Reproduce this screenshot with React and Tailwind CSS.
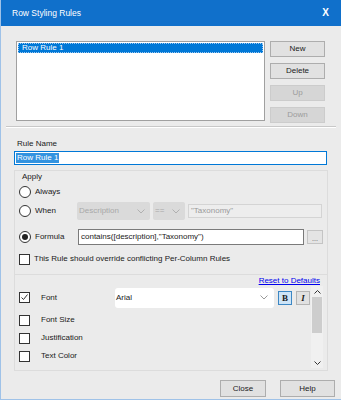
import React from 'react';

const Radio = ({ checked }) => (
  <span className="flex h-[12px] w-[12px] items-center justify-center rounded-full border border-[#333333] bg-white">
    {checked && <span className="h-[6px] w-[6px] rounded-full bg-[#222222]" />}
  </span>
);

const Check = ({ checked }) => (
  <span className="flex h-[11px] w-[11px] items-center justify-center border border-[#333333] bg-white">
    {checked && (
      <svg width="9" height="9" viewBox="0 0 9 9">
        <path d="M1.5 4.5 L3.5 6.5 L7.5 1.5" fill="none" stroke="#333" strokeWidth="1" />
      </svg>
    )}
  </span>
);

const Chevron = ({ color = '#9a9a9a' }) => (
  <svg width="8" height="5" viewBox="0 0 8 5">
    <path d="M0.5 0.5 L4 4 L7.5 0.5" fill="none" stroke={color} strokeWidth="1" />
  </svg>
);

const Button = ({ children, disabled, className = '' }) => (
  <div
    className={`flex items-center justify-center border text-[8px] ${
      disabled
        ? 'border-[#cccccc] bg-[#d6d6d6] text-[#9c9c9c]'
        : 'border-[#adadad] bg-[#e1e1e1] text-[#1a1a1a]'
    } ${className}`}
  >
    {children}
  </div>
);

export default function App() {
  const styleRows = [
    { label: 'Font', checked: true },
    { label: 'Font Size' },
    { label: 'Justification' },
    { label: 'Text Color' },
  ];

  return (
    <div
      className="flex h-[400px] w-[341px] flex-col border-b border-l border-[#9fc2e8] bg-[#ebebeb] text-[8px] leading-[12px] text-[#1a1a1a]"
      style={{ fontFamily: '"Liberation Sans", Arial, sans-serif' }}
    >
      {/* Title bar */}
      <div className="flex h-[26px] shrink-0 items-center justify-between bg-[#1070cb] pl-[11px] pr-[12px] text-white">
        <span className="text-[8.5px]">Row Styling Rules</span>
        <span className="text-[10px] font-bold">X</span>
      </div>

      {/* Rules list */}
      <div className="mt-[15px] flex pl-[15px]">
        <div className="h-[80px] w-[249px] border border-[#a0a0a0] bg-white p-[1px]">
          <div className="h-[10px] border border-dotted border-[#9cc8f0] bg-[#0078d7] pl-[3px] leading-[8px] text-white">Row Rule 1</div>
        </div>
        <div className="ml-[5px] flex w-[55px] flex-col gap-[6px]">
          <Button className="h-[16px]">New</Button>
          <Button className="h-[16px]">Delete</Button>
          <Button className="h-[16px]" disabled>Up</Button>
          <Button className="h-[16px]" disabled>Down</Button>
        </div>
      </div>

      <div className="mx-[5px] mt-[3px] h-[2px] border-t border-b border-t-[#c8c8c8] border-b-white" />

      {/* Rule name */}
      <div className="mt-[11px] pl-[16px] leading-[10px]">Rule Name</div>
      <div className="ml-[13px] mt-[2px] flex h-[14px] w-[313px] items-center border border-[#0078d7] bg-white pl-[1px]">
        <span className="bg-[#3393df] px-[1px] leading-[10px] text-white">Row Rule 1</span>
      </div>

      {/* Rule panel */}
      <div className="ml-[13px] mt-[5px] flex w-[314px] flex-col border border-[#dcdcdc]">
        <div className="pl-[7px] pt-[1px] leading-[10px]">Apply</div>

        <div className="mt-[4px] flex items-center pl-[4px]">
          <Radio />
          <span className="ml-[4px]">Always</span>
        </div>

        <div className="mt-[4px] flex items-center pl-[4px]">
          <Radio />
          <span className="ml-[4px] w-[38px]">When</span>
          <div className="ml-[4px] flex h-[18px] w-[73px] items-center justify-between rounded-[2px] bg-[#dadada] pl-[2px] pr-[5px] text-[#a8a8a8]">
            Description
            <Chevron color="#b0b0b0" />
          </div>
          <div className="ml-[3px] flex h-[18px] w-[32px] items-center justify-between rounded-[2px] bg-[#dadada] pl-[2px] pr-[5px] text-[#a8a8a8]">
            ==
            <Chevron color="#b0b0b0" />
          </div>
          <div className="ml-[3px] flex h-[14px] w-[134px] items-center border border-[#d4d4d4] bg-[#ededed] pl-[2px] text-[#9a9a9a]">
            "Taxonomy"
          </div>
        </div>

        <div className="mt-[9px] flex items-center pl-[4px]">
          <Radio checked />
          <span className="ml-[4px] w-[39px]">Formula</span>
          <div className="ml-[4px] flex h-[16px] w-[226px] items-center border border-[#7a7a7a] bg-white pl-[2px]">
            contains([description],"Taxonomy")
          </div>
          <div className="ml-[3px] flex h-[14px] w-[16px] items-end justify-center border border-[#c4c4c4] bg-[#e4e4e4] pb-[1px] text-[7px] leading-[7px] text-[#555]">
            ...
          </div>
        </div>

        <div className="mt-[8px] flex items-center pl-[4px]">
          <Check />
          <span className="ml-[4px]">This Rule should override conflicting Per-Column Rules</span>
        </div>

        <div className="mt-[9px] h-px bg-[#dcdcdc]" />

        {/* Style options */}
        <div className="flex justify-end pr-[7px] pt-[1px] leading-[10px]">
          <span className="text-[#0000ee] underline">Reset to Defaults</span>
        </div>
        <div className="flex">
          <div className="flex-1 pb-[5px]">
            {styleRows.map((row, i) => (
              <div
                key={row.label}
                className={`flex items-center pl-[4px] ${i === 0 ? 'mt-[1px] h-[21px]' : 'h-[18px]'} ${i === 1 ? 'mt-[3px]' : ''}`}
              >
                <Check checked={row.checked} />
                <span className="ml-[11px] w-[74px]">{row.label}</span>
                {i === 0 && (
                  <div className="flex items-center">
                    <div className="flex h-[20px] w-[159px] items-center justify-between rounded-[3px] bg-white pl-[1px] pr-[6px]">
                      Arial
                      <Chevron />
                    </div>
                    <div className="ml-[4px] flex h-[14px] w-[14px] items-center justify-center border border-[#3c87c4] bg-[#cde4f7] text-[9px] font-bold" style={{ fontFamily: '"Liberation Serif", serif' }}>
                      B
                    </div>
                    <div className="ml-[4px] flex h-[14px] w-[14px] items-center justify-center border border-[#b5b5b5] bg-[#e1e1e1] text-[9px] font-bold italic" style={{ fontFamily: '"Liberation Serif", serif' }}>
                      I
                    </div>
                  </div>
                )}
              </div>
            ))}
          </div>
          <div className="mr-[4px] mb-[2px] flex w-[12px] flex-col items-center bg-[#f0f0f0]">
            <div className="flex h-[11px] items-center">
              <svg width="7" height="4" viewBox="0 0 7 4"><path d="M0.5 3.5 L3.5 0.5 L6.5 3.5" fill="none" stroke="#333" strokeWidth="1" /></svg>
            </div>
            <div className="h-[36px] w-[10px] bg-[#cdcdcd]" />
            <div className="flex-1" />
            <div className="flex h-[11px] items-center">
              <svg width="7" height="4" viewBox="0 0 7 4"><path d="M0.5 0.5 L3.5 3.5 L6.5 0.5" fill="none" stroke="#333" strokeWidth="1" /></svg>
            </div>
          </div>
        </div>
      </div>

      {/* Footer */}
      <div className="mt-[9px] flex justify-end gap-[14px] pr-[6px]">
        <Button className="h-[17px] w-[46px]">Close</Button>
        <Button className="h-[17px] w-[55px]">Help</Button>
      </div>
    </div>
  );
}
